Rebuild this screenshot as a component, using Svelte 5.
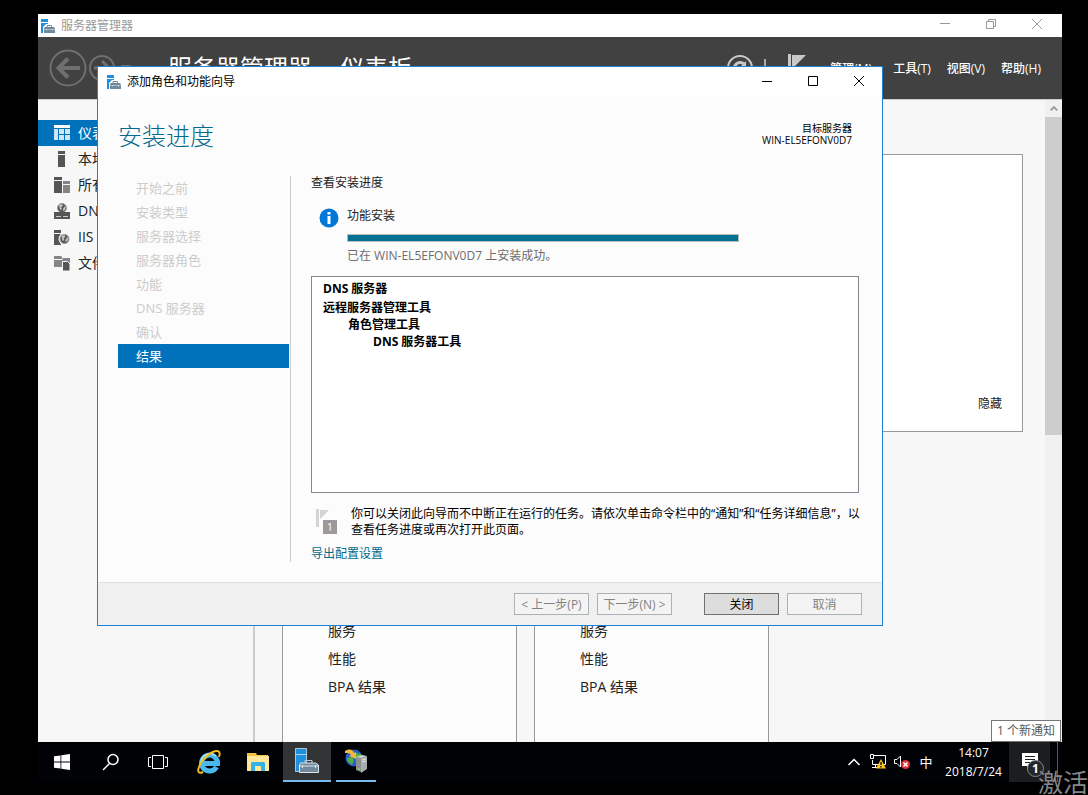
<script>
  const servers = [
    { icon: 'dashboard', label: '仪表板', active: true },
    { icon: 'local', label: '本地服务器' },
    { icon: 'all', label: '所有服务器' },
    { icon: 'dns', label: 'DNS' },
    { icon: 'iis', label: 'IIS' },
    { icon: 'files', label: '文件和存储服务' }
  ];
  const steps = ['开始之前', '安装类型', '服务器选择', '服务器角色', '功能', 'DNS 服务器', '确认', '结果'];
  const tileRows = ['服务', '性能', 'BPA 结果'];
</script>

{#snippet managerIcon()}
  <svg class="app-icon" viewBox="0 0 14 14" aria-hidden="true">
    <path fill="#1e90dd" d="M0 0h7v3H0zM0 4h7v10H0z" />
    <path fill="#fff" d="M2 8l3-3h6l3 3v6H2z" />
    <path fill="none" stroke="#71899c" d="M6 8V6.500h4.500V8" />
    <path fill="#71899c" d="M4 8h9l1 1.500V14H3V9z" />
    <path stroke="#d3dde5" stroke-width=".6" d="M3 10.500h11M5.500 10v1.500M11.500 10v1.500" />
  </svg>
{/snippet}

{#snippet globe(cx, cy, r)}
  <circle {cx} {cy} {r} fill="#555" stroke="#999" />
  <path d="M{cx - 3} {cy - 3}l3-1 1 2-2 1 1 2-2 1zM{cx + 1} {cy + 1}l2-3 1 1-1 3-2 1z" fill="#c4c4c4" />
{/snippet}

<div class="desktop">
  <div class="window">
    <header class="titlebar">
      {@render managerIcon()}
      <span class="caption">服务器管理器</span>
      <div class="controls">
        <button aria-label="最小化"><svg viewBox="0 0 12 12"><path d="M1 5.500h10" /></svg></button>
        <button aria-label="还原"><svg viewBox="0 0 12 12"><path d="M1.500 3.500h7v7h-7zM3.500 3.500v-2h7v7h-2" /></svg></button>
        <button aria-label="关闭窗口"><svg viewBox="0 0 12 12"><path d="M1 1l10 10M11 1L1 11" /></svg></button>
      </div>
    </header>

    <div class="commandbar">
      <button class="back" aria-label="后退">
        <svg viewBox="0 0 38 38"><circle cx="19" cy="19" r="17.500" /><path stroke-width="4" d="M31 19H9M19 9.500L9.500 19l9.500 9.500" /></svg>
      </button>
      <button class="forward" aria-label="前进">
        <svg viewBox="0 0 26 26"><circle cx="13" cy="13" r="12" /><path stroke-width="3" d="M5 13h15M13 6l7 7-7 7" /></svg>
      </button>
      <button class="history" aria-label="历史"><svg viewBox="0 0 10 8"><path d="M0 1h10L5 7z" /></svg></button>
      <h1>服务器管理器<span>·</span>仪表板</h1>
      <button class="refresh" aria-label="刷新">
        <svg viewBox="0 0 26 26"><circle cx="13" cy="13" r="12" stroke-width="2" /><path stroke-width="3" d="M18 17a6 6 0 1 1 0-7" /><path fill="#c8c8c8" stroke="none" d="M19 6v7h-7z" /></svg>
      </button>
      <span class="bar"></span>
      <button class="flag" aria-label="通知">
        <svg viewBox="0 0 18 28"><path fill="#c8c8c8" d="M0 0h3v28H0zM4 1h14L4 15z" /></svg>
      </button>
      <nav class="menu">
        <button class="manage">管理(M)</button>
        <button>工具(T)</button>
        <button>视图(V)</button>
        <button>帮助(H)</button>
      </nav>
    </div>

    <div class="body">
      <nav class="sidebar">
        {#each servers as s}
          <button class:active={s.active}>
            <svg viewBox="0 0 16 16" aria-hidden="true">
              {#if s.icon === 'dashboard'}
                <path fill="#fff" d="M0 0h16v3H0z" />
                <path fill="#cde5f5" d="M0 4h4v11H0zM5 4h5v5H5zM11 4h5v5h-5zM5 10h5v5H5zM11 10h5v5h-5z" />
              {:else if s.icon === 'local'}
                <path fill="#555" d="M4 0h7v3H4zM4 4h7v12H4z" />
              {:else if s.icon === 'all'}
                <path fill="#555" d="M0 0h8v3H0zM0 4h8v12H0z" />
                <path fill="#858585" d="M9 4h7v3H9zM9 8h7v8H9z" />
              {:else if s.icon === 'dns'}
                {@render globe(8, 5, 4.5)}
                <path fill="#555" d="M0 9h16v7H0z" />
                <path stroke="#ccc" d="M2 13.500h5M9 13.500h5" />
              {:else if s.icon === 'iis'}
                <path fill="#555" d="M0 1h7v3H0zM0 5h7v11H0z" />
                <circle cx="10.500" cy="10" r="6" fill="#f7f7f7" />
                {@render globe(10.5, 10, 4.5)}
              {:else}
                <path fill="#858585" d="M0 1h7l1 1v2H0zM0 5h8l1-2h7v9H0z" />
                <path fill="#555" stroke="#f7f7f7" d="M8.500 6.500h5l2.500 2.500v7H8.500z" />
              {/if}
            </svg>
            <span>{s.label}</span>
          </button>
        {/each}
      </nav>

      <main>
        <section class="welcome"><button>隐藏</button></section>
        <div class="tiles">
          {#each [0, 1] as tile (tile)}
            <ul class="tile">
              {#each tileRows as row}<li>{row}</li>{/each}
            </ul>
          {/each}
        </div>
      </main>

      <div class="scrollbar">
        <svg viewBox="0 0 17 18" aria-hidden="true"><path fill="none" stroke="#999" stroke-width="2" d="M5.500 11L9 7.500l3.500 3.500" /></svg>
        <div class="thumb"></div>
      </div>
    </div>

    <div class="dialog" role="dialog" aria-labelledby="wizard-title">
      <header class="titlebar">
        {@render managerIcon()}
        <span class="caption" id="wizard-title">添加角色和功能向导</span>
        <div class="controls">
          <button aria-label="最小化向导"><svg viewBox="0 0 12 12"><path d="M1 6.500h10" /></svg></button>
          <button aria-label="最大化向导"><svg viewBox="0 0 12 12"><path d="M1.500 1.500h9v9h-9z" /></svg></button>
          <button aria-label="关闭向导"><svg viewBox="0 0 12 12"><path d="M1 1l10 10M11 1L1 11" /></svg></button>
        </div>
      </header>

      <div class="heading">
        <h2>安装进度</h2>
        <p>目标服务器<br />WIN-EL5EFONV0D7</p>
      </div>

      <div class="columns">
        <ol class="steps">
          {#each steps as step, i}
            <li class:current={i === steps.length - 1}>{step}</li>
          {/each}
        </ol>

        <div class="content">
          <p class="lead">查看安装进度</p>
          <div class="status">
            <svg viewBox="0 0 20 20" aria-hidden="true"><circle cx="10" cy="10" r="9.500" fill="#0078d7" /><path fill="#fff" d="M8.500 4h3v2.500h-3zM8.500 8h3v8h-3z" /></svg>
            <div>
              <label for="install-progress">功能安装</label>
              <progress id="install-progress" value="100" max="100"></progress>
              <p>已在 WIN-EL5EFONV0D7 上安装成功。</p>
            </div>
          </div>
          <div class="results">
            <ul><li>DNS 服务器</li></ul>
            <ul>
              <li>远程服务器管理工具
                <ul>
                  <li>角色管理工具
                    <ul><li>DNS 服务器工具</li></ul>
                  </li>
                </ul>
              </li>
            </ul>
          </div>
          <div class="notice">
            <svg viewBox="0 0 22 26" aria-hidden="true">
              <path fill="#d3d3d3" d="M0 1h3v18H0zM4 2h9L4 11z" />
              <path fill="#9b999c" d="M7 12h14v14H7z" />
              <text x="14" y="23" text-anchor="middle" fill="#fff" font-size="11">1</text>
            </svg>
            <p>你可以关闭此向导而不中断正在运行的任务。请依次单击命令栏中的“通知”和“任务详细信息”，以查看任务进度或再次打开此页面。</p>
          </div>
          <a href="#export">导出配置设置</a>
        </div>
      </div>

      <footer>
        <button disabled>&lt; 上一步(P)</button>
        <button disabled>下一步(N) &gt;</button>
        <button class="primary">关闭</button>
        <button disabled>取消</button>
      </footer>
    </div>

    <div class="toast">1 个新通知</div>
  </div>

  <div class="taskbar">
    <div class="apps">
      <button aria-label="开始">
        <svg width="16" height="16" viewBox="0 0 16 16"><path fill="#fff" d="M0 2.300l6.500-.9v6.200H0zM7.300 1.300L16 0v7.600H7.300zM0 8.400h6.500v6.200L0 13.700zM7.300 8.400H16V16l-8.700-1.300z" /></svg>
      </button>
      <button aria-label="搜索">
        <svg width="18" height="18" viewBox="0 0 18 18"><circle cx="11" cy="6.500" r="5" fill="none" stroke="#fff" stroke-width="1.500" /><path stroke="#fff" stroke-width="1.500" d="M7.500 10.500L1 17" /></svg>
      </button>
      <button class="taskview" aria-label="任务视图">
        <svg width="20" height="16" viewBox="0 0 20 16"><path fill="none" stroke="#fff" d="M4.500 1.500h11v13h-11zM3 3.500H.5v9H3M17 3.500h2.500v9H17" /></svg>
      </button>
      <button aria-label="Internet Explorer">
        <svg width="24" height="24" viewBox="0 0 24 24">
          <path fill="none" stroke="#49b9ef" stroke-width="5" d="M19.500 17A8 8 0 1 1 20.500 13.500H7" />
          <path fill="none" stroke="#b5e9fd" stroke-width="1.500" d="M4 12a9 9 0 0 1 15-6" />
          <path fill="none" stroke="#f5bd1c" stroke-width="2" d="M6 22C2 24 0 22 2 17 5 9 14 1 20 1c3 0 3 3 2 6" />
        </svg>
      </button>
      <button aria-label="文件资源管理器">
        <svg width="22" height="20" viewBox="0 0 22 20">
          <path fill="#f4c33e" d="M0 1h9l1 2h11v3H0z" /><path fill="#ffe69b" d="M0 4h22v15H0z" /><path fill="#31b2e8" d="M4 19v-8l1-1h12l1 1v8h-4v-5H8v5z" />
        </svg>
      </button>
      <button class="running selected" aria-label="服务器管理器">
        <svg width="24" height="26" viewBox="0 0 24 26">
          <path fill="#1e90dd" stroke="#e5f2fb" stroke-width=".7" d="M.5.500h11v23H.5zM.5 6.500h11" />
          <path fill="none" stroke="#b9cbd8" d="M10 15v-2.500h7V15" />
          <path fill="#71899c" stroke="#dce5eb" d="M5.500 15h15l3 2v7.500h-19V17z" />
          <path fill="none" stroke="#dce5eb" d="M5 18h18M7.500 17v3M20.500 17v3" />
        </svg>
      </button>
      <button class="running" aria-label="IIS 管理器">
        <svg width="24" height="24" viewBox="0 0 24 24">
          <circle cx="10" cy="9" r="8.500" fill="#285ec9" />
          <path fill="#4caf45" d="M3 9l5-1 2 3-2 5-4-3zM12 4l5 1 1 5-4 3-2-4z" />
          <path fill="#f5b936" d="M1 2c5-3 8-1 9 2l2-1v7L5 7l2-1C6 4 4 4 1 4z" />
          <path fill="#8b9092" d="M12 8l5 1v14l-5-2z" /><path fill="#d0d3d4" d="M12 8l6-2 5 1-5 2z" /><path fill="#a8adaf" d="M17 9l6-2v13l-6 4z" />
          <path stroke="#e8e8e8" d="M18 11l4-1M18 13l4-1" /><circle cx="15" cy="20" r="1" fill="#81dc3f" />
        </svg>
      </button>
    </div>
    <div class="tray">
      <button aria-label="显示隐藏的图标"><svg width="14" height="8" viewBox="0 0 14 8"><path fill="none" stroke="#fff" stroke-width="1.500" d="M1.500 7L7 1.500 12.500 7" /></svg></button>
      <button aria-label="网络">
        <svg width="18" height="16" viewBox="0 0 18 16">
          <path fill="none" stroke="#fff" d="M5 1.500h11.500v9H3.500V6M1.500.500h3v4h-3zM3 13.500h5M6.500 11v2" /><path fill="#fcc419" d="M12 5l5 9.500H7z" /><path stroke="#222" stroke-width="1.500" d="M12 8v3M12 12v1.500" />
        </svg>
      </button>
      <button aria-label="音量">
        <svg width="18" height="16" viewBox="0 0 18 16">
          <path fill="none" stroke="#fff" d="M1.500 5.500H4l3.500-3.500v11L4 9.500H1.500z" /><circle cx="12.500" cy="10.500" r="4.500" fill="#df3037" /><path stroke="#fff" stroke-width="1.500" d="M10.500 8.500l4 4M14.500 8.500l-4 4" />
        </svg>
      </button>
      <button class="ime">中</button>
      <button class="clock">14:07<br />2018/7/24</button>
      <button class="action" aria-label="操作中心">
        <svg width="16" height="18" viewBox="0 0 16 18"><path fill="#fff" d="M0 0h16v13H9l-4 4v-4H0z" /><path stroke="#1f1f22" d="M3 3.500h10M3 6.500h10M3 9.500h7" /></svg>
        <span class="badge">1</span>
      </button>
      <button class="peek" aria-label="显示桌面"></button>
    </div>
  </div>
  <span class="watermark">激活</span>
</div>

<style>
  :global(body) {
    background: #000;
  }
  .desktop {
    position: relative;
    display: flex;
    flex-direction: column;
    box-sizing: border-box;
    min-height: 100vh;
    padding: 14px 26px 13px 38px;
    overflow: hidden;
    background: #000;
    font: 12px/16px "Open Sans", "Noto Sans CJK SC", sans-serif;
    color: #222;
  }
  .desktop *,
  .desktop *::before {
    box-sizing: border-box;
  }
  button {
    padding: 0;
    border: 0;
    background: none;
    font: inherit;
    color: inherit;
    white-space: nowrap;
  }
  h1,
  h2,
  p,
  ul,
  ol {
    margin: 0;
    padding: 0;
    list-style: none;
  }
  svg {
    display: block;
    flex: none;
  }

  .window {
    position: relative;
    flex: 1;
    display: flex;
    flex-direction: column;
  }
  .titlebar {
    display: flex;
    align-items: center;
    height: 23px;
    padding: 0 2px 0 3px;
    background: #fff;
    color: #999;
  }
  .app-icon {
    width: 14px;
    height: 14px;
  }
  .caption {
    margin-left: 6px;
  }
  .controls {
    display: flex;
    align-self: flex-start;
    margin-left: auto;
  }
  .controls button {
    display: grid;
    place-items: center;
    width: 46px;
    height: 20px;
  }
  .controls svg {
    width: 12px;
    height: 12px;
    fill: none;
    stroke: currentColor;
  }

  .commandbar {
    display: flex;
    align-items: center;
    height: 62px;
    padding: 0 21px 0 11px;
    background: #414141;
    color: #fff;
  }
  .back svg,
  .forward svg,
  .refresh svg {
    width: 38px;
    fill: none;
    stroke: #6f6f6f;
    stroke-width: 2;
  }
  .forward svg,
  .refresh svg {
    width: 26px;
  }
  .forward {
    margin-left: 2px;
  }
  .refresh svg {
    stroke: #c8c8c8;
  }
  .history {
    width: 10px;
    margin: 0 37px 0 6px;
    fill: #6f6f6f;
  }
  h1 {
    font-size: 24px;
    font-weight: 400;
    line-height: 36px;
    white-space: nowrap;
  }
  h1 span {
    display: inline-block;
    width: 28px;
    text-align: center;
  }
  .refresh {
    margin-left: auto;
  }
  .bar {
    width: 2px;
    height: 18px;
    margin: 0 22px 0 11px;
    background: #aaa;
  }
  .flag svg {
    width: 18px;
    height: 28px;
  }
  .menu {
    display: flex;
    gap: 16px;
    margin-left: 24px;
    padding-top: 2px;
    font-weight: 500;
  }
  .manage {
    margin-right: 5px;
  }

  .body {
    flex: 1;
    display: flex;
    border-top: 1px solid #ccc;
    background: #f7f7f7;
  }
  .sidebar {
    flex: none;
    width: 217px;
    padding-top: 20px;
    border-right: 2px solid #ccc;
    font-size: 14px;
  }
  .sidebar button {
    display: flex;
    align-items: center;
    gap: 8px;
    width: 100%;
    height: 26px;
    padding-left: 16px;
  }
  .sidebar svg {
    width: 16px;
    height: 16px;
  }
  .sidebar .active {
    background: #0072bc;
    color: #fff;
  }
  main {
    flex: 1;
    display: flex;
    flex-direction: column;
    padding: 54px 22px 0 27px;
  }
  .welcome {
    display: flex;
    justify-content: flex-end;
    align-items: flex-end;
    min-height: 278px;
    padding: 19px 20px;
    border: 1px solid #999;
    background: #fff;
  }
  .tiles {
    flex: 1;
    display: flex;
    gap: 17px;
    margin-top: 100px;
  }
  .tile {
    width: 235px;
    padding: 84px 0 0 45px;
    border: 1px solid #999;
    border-bottom: 0;
    background: #fcfcfc;
    font-size: 14px;
    line-height: 28px;
  }
  .scrollbar {
    width: 17px;
    background: #f0f0f0;
  }
  .scrollbar svg {
    width: 17px;
    height: 17px;
  }
  .thumb {
    height: 318px;
    background: #cdcdcd;
  }

  .dialog {
    position: absolute;
    top: 52px;
    left: 59px;
    right: 179px;
    border: 1px solid #1883d7;
    background: #fcfcfc;
    color: #222;
  }
  .dialog .titlebar {
    height: 30px;
    padding: 0 0 0 9px;
    color: #000;
  }
  .dialog .controls button {
    height: 28px;
  }
  .heading {
    display: flex;
    justify-content: space-between;
    padding: 21px 30px 22px 20px;
  }
  h2 {
    font-size: 24px;
    font-weight: 300;
    line-height: 36px;
    color: #006a8e;
  }
  .heading p {
    padding-top: 4px;
    font-size: 10px;
    line-height: 12px;
    text-align: right;
    color: #000;
  }
  .columns {
    display: flex;
    padding: 0 20px 20px;
  }
  .steps {
    flex: none;
    width: 173px;
    padding-right: 1px;
    border-right: 1px solid #ccc;
    font-size: 13px;
    line-height: 24px;
    color: #ccc;
  }
  .steps li {
    padding-left: 18px;
  }
  .steps .current {
    background: #0072bc;
    color: #fff;
  }
  .content {
    flex: 1;
    padding-left: 20px;
  }
  .lead {
    line-height: 14px;
  }
  .status {
    display: flex;
    gap: 8px;
    margin: 18px 0 12px 8px;
  }
  .status svg {
    width: 20px;
    height: 20px;
  }
  .status div {
    flex: 1;
  }
  .status label {
    display: block;
  }
  .status p {
    color: #6d6d6d;
  }
  progress {
    display: block;
    width: 392px;
    height: 8px;
    margin: 10px 0 6px;
    border: 1px solid #bcbcbc;
    appearance: none;
    background: #e6e6e6;
  }
  progress::-webkit-progress-bar {
    background: #e6e6e6;
  }
  progress::-webkit-progress-value {
    background: #007394;
  }
  .results {
    min-height: 217px;
    margin-right: 3px;
    padding: 3px 11px;
    border: 1px solid #828790;
    background: #fff;
    color: #000;
    font-weight: 700;
    line-height: 17px;
  }
  .results > ul + ul {
    margin-top: 2px;
  }
  .results li ul {
    padding-left: 25px;
  }
  .notice {
    display: flex;
    gap: 13px;
    margin: 13px 0 8px 5px;
    color: #000;
  }
  .notice svg {
    width: 22px;
    height: 26px;
    margin-top: 2px;
  }
  .content a {
    display: block;
    color: #006a8e;
    text-decoration: none;
  }
  footer {
    display: flex;
    justify-content: flex-end;
    gap: 8px;
    padding: 10px 20px;
    border-top: 1px solid #dfdfdf;
    background: #f0f0f0;
  }
  footer button {
    width: 75px;
    height: 22px;
    padding-top: 2px;
    border: 1px solid #adb2b5;
    background: #f4f4f4;
    color: #838383;
  }
  footer .primary {
    margin-left: 24px;
    border-color: #707070;
    background: #ddd;
    color: #000;
  }

  .toast {
    position: absolute;
    right: 1px;
    bottom: 0;
    padding: 2px 5px;
    border: 1px solid #767676;
    background: #fff;
    color: #575757;
  }

  .taskbar {
    display: flex;
    justify-content: space-between;
    height: 40px;
    background: #010206;
    color: #fff;
  }
  .apps,
  .tray {
    display: flex;
  }
  .apps {
    gap: 1px;
  }
  .apps button {
    display: grid;
    place-items: center;
    width: 48px;
    height: 40px;
  }
  .apps .taskview {
    width: 44px;
    margin-right: 4px;
  }
  .apps .running {
    width: 40px;
    margin-left: 4px;
    border-bottom: 2px solid #76b9ed;
  }
  .apps .selected {
    width: 48px;
    margin-left: 0;
    background: #333436;
  }
  .tray button {
    display: grid;
    place-items: center;
    width: 24px;
  }
  .tray .ime {
    font-size: 13px;
  }
  .tray .clock {
    display: block;
    width: 71px;
    line-height: 19px;
    text-align: center;
  }
  .tray .action {
    position: relative;
    width: 41px;
    margin-right: 7px;
    background: #1c1d20;
  }
  .badge {
    position: absolute;
    left: 18px;
    top: 18px;
    width: 17px;
    height: 17px;
    border: 1px solid #888;
    border-radius: 50%;
    background: #222529;
    font-size: 12px;
    font-weight: 700;
    line-height: 15px;
    text-align: center;
  }
  .tray .peek {
    width: 5px;
    border-left: 1px solid #55575b;
  }
  .watermark {
    position: absolute;
    right: 0;
    bottom: 0;
    font-size: 25px;
    line-height: 26px;
    color: #85878a;
  }
</style>
